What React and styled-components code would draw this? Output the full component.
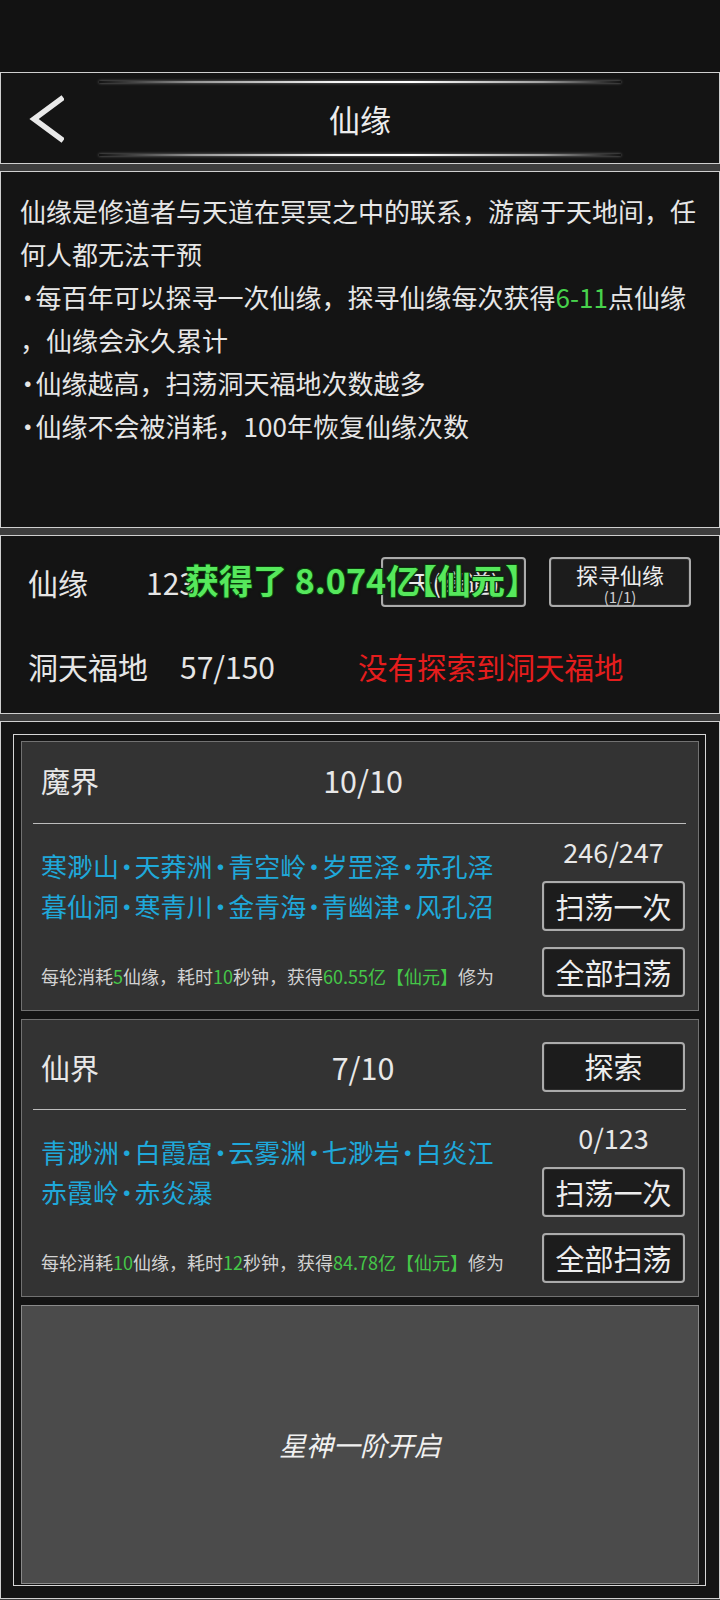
import React from "react";
import styled, { createGlobalStyle } from "styled-components";

const GlobalStyle = createGlobalStyle`
  html, body { margin: 0; padding: 0; background: #3d3d3d; }
  body {
    font-family: "Noto Sans CJK SC", "Noto Sans", sans-serif;
    color: #e8e8e8;
  }
  * { box-sizing: border-box; }
`;

const Page = styled.div`
  width: 720px;
  display: flex;
  flex-direction: column;
`;

const StatusBar = styled.div`
  height: 72px;
  background: #121212;
`;

const Stack = styled.div`
  display: flex;
  flex-direction: column;
  gap: 7px;
`;

const Panel = styled.section`
  position: relative;
  height: ${(p) => p.$h}px;
  flex: none;
  background: #141414;
  border: 1px solid #cfcfcf;
`;

const HeaderPanel = styled(Panel)`
  display: flex;
  flex-direction: column;
`;

const GlowLine = styled.div`
  width: 522px;
  height: 2px;
  margin: ${(p) => (p.$bottom ? "0 auto 7px" : "8px auto 0")};
  background: linear-gradient(
    90deg,
    rgba(255, 255, 255, 0) 0%,
    rgba(255, 255, 255, 0.55) 18%,
    rgba(255, 255, 255, 0.95) 45%,
    #ffffff 60%,
    rgba(255, 255, 255, 0.6) 85%,
    rgba(255, 255, 255, 0) 100%
  );
  box-shadow: 0 0 3px rgba(255, 255, 255, 0.5);
`;

const TitleRow = styled.div`
  flex: 1;
  display: grid;
  grid-template-columns: 1fr auto 1fr;
  align-items: center;
`;

const BackButton = styled.button`
  justify-self: start;
  margin-left: 27px;
  padding: 0;
  border: 0;
  background: none;
  display: flex;
  cursor: pointer;
`;

const Title = styled.h1`
  margin: 0;
  font-size: 31px;
  font-weight: 400;
  line-height: 40px;
  color: #ececec;
`;

const DescPanel = styled(Panel)`
  padding: 17px 18px 0 19px;
  font-size: 26px;
  line-height: 43px;
  white-space: nowrap;
  color: #e6e6e6;
`;

const Dot = styled.span`
  display: inline-flex;
  justify-content: center;
  width: 0.6em;
  overflow: visible;
`;

const Green = styled.span`
  color: ${(p) => p.$c || "#47d24c"};
`;

const StatsPanel = styled(Panel)`
  padding: 21px 28px 0 27px;
  font-size: 30px;
`;

const StatRow = styled.div`
  display: flex;
  align-items: center;
  height: ${(p) => p.$h}px;
  margin-top: ${(p) => p.$mt || 0}px;
`;

const StatLabel = styled.span`
  width: ${(p) => p.$w}px;
  flex: none;
  color: #e6e6e6;
`;

const StatValue = styled.span`
  width: ${(p) => (p.$w ? `${p.$w}px` : "auto")};
  flex: ${(p) => (p.$w ? "none" : "1")};
  color: #e6e6e6;
`;

const Warn = styled.span`
  color: #e51d1d;
  font-size: 29.5px;
`;

const ButtonGroup = styled.div`
  display: flex;
  gap: 23px;
`;

const Btn = styled.button`
  width: ${(p) => p.$w || 143}px;
  height: 50px;
  border: 2px solid #ababab;
  border-radius: 4px;
  background: #1c1c1c;
  color: #ededed;
  font-family: inherit;
  font-size: ${(p) => p.$fs || 29}px;
  line-height: 1;
  display: flex;
  flex-direction: column;
  align-items: center;
  justify-content: ${(p) => (p.$stacked ? "flex-start" : "center")};
  padding: ${(p) => (p.$stacked ? "2px 0 0" : "0")};
  cursor: pointer;
  box-shadow: inset 0 0 0 1px #2c2c2c;
`;

const BtnMain = styled.span`
  font-size: 22px;
  line-height: 27px;
`;

const BtnSub = styled.span`
  font-size: 15px;
  line-height: 17px;
  color: #cfcfcf;
`;

const Toast = styled.div`
  position: absolute;
  left: 184px;
  top: 22px;
  z-index: 5;
  font-size: 34px;
  font-weight: 700;
  line-height: 44px;
  white-space: nowrap;
  color: #56e85c;
  text-shadow: 1px 1px 0 #0b3a0d, -1px -1px 0 #0b3a0d, 1px -1px 0 #0b3a0d,
    -1px 1px 0 #0b3a0d, 0 0 3px #000;
`;

const Half = styled.span`
  font-feature-settings: "halt";
`;

const ListPanel = styled(Panel)`
  padding: 12px 13px 12px 12px;
`;

const Frame = styled.div`
  height: 100%;
  border: 1px solid #d6d6d6;
  padding: 6px 6px 1px 7px;
  display: flex;
  flex-direction: column;
  gap: 8px;
`;

const Card = styled.div`
  background: #333333;
  border: 1px solid #727272;
  display: flex;
  flex-direction: column;
`;

const CardHeader = styled.div`
  height: ${(p) => p.$h}px;
  padding: ${(p) => p.$pt || 0}px 13px ${(p) => p.$pb || 0}px 19px;
  display: grid;
  grid-template-columns: 1fr auto 1fr;
  align-items: center;
  font-size: 29px;
  color: #e8e8e8;
`;

const CardTitle = styled.span`
  justify-self: start;
`;

const CardCount = styled.span`
  justify-self: center;
  font-size: 30.5px;
`;

const HeaderAction = styled.div`
  justify-self: end;
`;

const Divider = styled.div`
  height: 1px;
  margin: 0 12px 0 11px;
  background: #bdbdbd;
`;

const CardBody = styled.div`
  display: flex;
`;

const Places = styled.div`
  flex: 1;
  padding: 22px 0 22px 19px;
  display: flex;
  flex-direction: column;
  justify-content: space-between;
`;

const PlaceLine = styled.div`
  font-size: 26px;
  line-height: 40px;
  color: #1fa8da;
  white-space: nowrap;
`;

const Cost = styled.div`
  font-size: 18px;
  line-height: 24px;
  color: #d2d2d2;
  white-space: nowrap;
`;

const Side = styled.div`
  width: 143px;
  margin-right: 13px;
  padding: 9px 0 13px;
  display: flex;
  flex-direction: column;
  align-items: center;
  gap: 16px;
`;

const Progress = styled.div`
  height: 38px;
  line-height: 38px;
  font-size: 27px;
  color: #e8e8e8;
  margin-bottom: -6px;
`;

const LockedCard = styled.div`
  flex: 1;
  background: #4b4b4b;
  border: 1px solid #8a8a8a;
  display: flex;
  align-items: center;
  justify-content: center;
  font-size: 27px;
  font-style: italic;
  color: #f0f0f0;
`;

function PlaceLines({ lines }) {
  return lines.map((names, i) => (
    <PlaceLine key={i}>
      {names.map((n, j) => (
        <React.Fragment key={n}>
          {j > 0 && <Dot>·</Dot>}
          {n}
        </React.Fragment>
      ))}
    </PlaceLine>
  ));
}

function Realm({ title, count, action, lines, progress, cost, headerH, headerPt, headerPb }) {
  return (
    <Card>
      <CardHeader $h={headerH} $pt={headerPt} $pb={headerPb}>
        <CardTitle>{title}</CardTitle>
        <CardCount>{count}</CardCount>
        <HeaderAction>{action && <Btn>{action}</Btn>}</HeaderAction>
      </CardHeader>
      <Divider />
      <CardBody>
        <Places>
          <div>
            <PlaceLines lines={lines} />
          </div>
          <Cost>
            每轮消耗<Green $c="#45c748">{cost.use}</Green>仙缘，耗时
            <Green $c="#45c748">{cost.time}</Green>秒钟，获得
            <Green $c="#45c748">{cost.gain}亿【仙元】</Green>修为
          </Cost>
        </Places>
        <Side>
          <Progress>{progress}</Progress>
          <Btn>扫荡一次</Btn>
          <Btn>全部扫荡</Btn>
        </Side>
      </CardBody>
    </Card>
  );
}

function Chevron() {
  return (
    <svg width="36" height="52" viewBox="0 0 36 52" aria-hidden="true">
      <polyline
        points="33,6 6,26 33,46"
        fill="none"
        stroke="#e9e9e9"
        strokeWidth="5.5"
        strokeLinecap="square"
        strokeLinejoin="miter"
      />
    </svg>
  );
}

export default function App() {
  return (
    <Page>
      <GlobalStyle />
      <StatusBar />
      <Stack>
        <HeaderPanel $h={92}>
          <GlowLine />
          <TitleRow>
            <BackButton aria-label="返回">
              <Chevron />
            </BackButton>
            <Title>仙缘</Title>
            <span />
          </TitleRow>
          <GlowLine $bottom />
        </HeaderPanel>
        <DescPanel $h={357}>
          仙缘是修道者与天道在冥冥之中的联系，游离于天地间，任
          <br />
          何人都无法干预
          <br />
          <Dot>·</Dot>每百年可以探寻一次仙缘，探寻仙缘每次获得<Green>6-11</Green>点仙缘
          <br />
          ，仙缘会永久累计
          <br />
          <Dot>·</Dot>仙缘越高，扫荡洞天福地次数越多
          <br />
          <Dot>·</Dot>仙缘不会被消耗，100年恢复仙缘次数
        </DescPanel>
        <StatsPanel $h={179}>
          <StatRow $h={50}>
            <StatLabel $w={118}>仙缘</StatLabel>
            <StatValue>123</StatValue>
            <ButtonGroup>
              <Btn $w={145} $fs={25}>天(缘道)</Btn>
              <Btn $w={142} $stacked>
                <BtnMain>探寻仙缘</BtnMain>
                <BtnSub>(1/1)</BtnSub>
              </Btn>
            </ButtonGroup>
          </StatRow>
          <StatRow $h={40} $mt={39}>
            <StatLabel $w={152}>洞天福地</StatLabel>
            <StatValue $w={178}>57/150</StatValue>
            <Warn>没有探索到洞天福地</Warn>
          </StatRow>
          <Toast>
            获得了 8.074亿<Half>【</Half>仙元<Half>】</Half>
          </Toast>
        </StatsPanel>
        <ListPanel $h={878}>
          <Frame>
            <Realm
              title="魔界"
              count="10/10"
              headerH={81}
              headerPb={5}
              lines={[
                ["寒渺山", "天莽洲", "青空岭", "岁罡泽", "赤孔泽"],
                ["暮仙洞", "寒青川", "金青海", "青幽津", "风孔沼"],
              ]}
              progress="246/247"
              cost={{ use: "5", time: "10", gain: "60.55" }}
            />
            <Realm
              title="仙界"
              count="7/10"
              action="探索"
              headerH={89}
              headerPt={4}
              lines={[
                ["青渺洲", "白霞窟", "云雾渊", "七渺岩", "白炎江"],
                ["赤霞岭", "赤炎瀑"],
              ]}
              progress="0/123"
              cost={{ use: "10", time: "12", gain: "84.78" }}
            />
            <LockedCard>星神一阶开启</LockedCard>
          </Frame>
        </ListPanel>
      </Stack>
    </Page>
  );
}
